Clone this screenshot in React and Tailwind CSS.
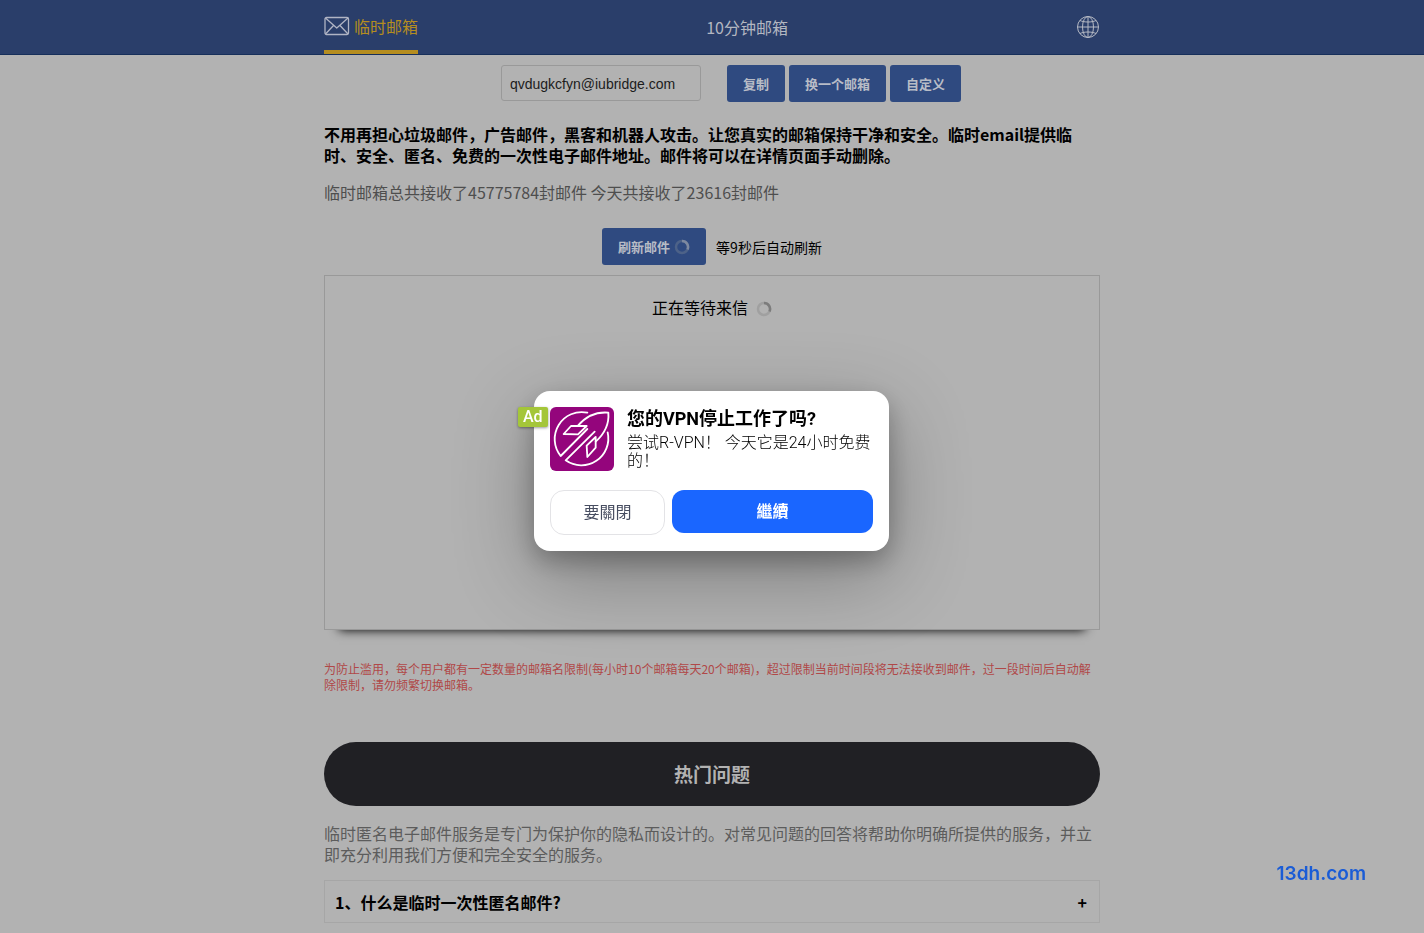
import React from "react";

function Logo() {
  return (
    <svg viewBox="0 0 192 192" className="size-16 shrink-0 rounded-md bg-[#94057c]" fill="none" stroke="#fff" strokeWidth="5.500" strokeLinejoin="round" strokeLinecap="round" aria-hidden="true">
      <path d="M112 17A81 81 0 0 0 32 147L112 66" />
      <path d="M173 76A81 81 0 0 1 47 160L134 74" />
      <path d="M84 56C108 28 140 14 175 17C178 52 164 80 137 104" />
      <path d="M41 81L63 57H110L84 82Z" />
      <path d="M110 116L137 90V122L112 150Z" />
    </svg>
  );
}

function Globe() {
  return (
    <svg viewBox="0 0 24 24" className="size-6" fill="none" stroke="#b5b9c4" strokeWidth="1" aria-hidden="true">
      <circle cx="12" cy="12" r="10.5" />
      <ellipse cx="12" cy="12" rx="5.500" ry="10.5" />
      <path d="M12 1.500V22.500M1.500 12H22.500M4 5.500C8 7.500 16 7.500 20 5.500M4 18.500C8 16.500 16 16.500 20 18.500" />
    </svg>
  );
}

function Envelope() {
  return (
    <svg viewBox="0 0 26 20" className="h-5 w-[26px]" fill="none" stroke="#b0b4c4" strokeWidth="1.3" strokeLinejoin="round" aria-hidden="true">
      <rect x="1" y="1.500" width="23.500" height="17" rx="1.500" />
      <path d="M1.500 2L12.750 12L24 2M1.500 18L9.500 9.500M24 18L16 9.500" />
    </svg>
  );
}

function Spinner({ track, arc }) {
  return (
    <svg viewBox="0 0 16 16" className="size-4" fill="none" strokeWidth="2.500" aria-hidden="true">
      <circle cx="8" cy="8" r="6" stroke={track} />
      <path d="M8 2A6 6 0 0 1 13.500 10.500" stroke={arc} />
    </svg>
  );
}

function BlueButton({ children }) {
  return (
    <button type="button" className="flex h-[37px] items-center gap-1 rounded-[3px] bg-[#2f4a80] px-4 pt-px text-[13px] font-bold text-[#b8bcc6]">
      {children}
    </button>
  );
}

function AdDialog() {
  return (
    <div className="fixed inset-0 flex items-center justify-center pt-[9px] pr-px">
      <section role="dialog" aria-labelledby="ad-title" className="relative w-[355px] rounded-2xl bg-white p-4 font-['Roboto','Noto_Sans_CJK_SC',sans-serif] shadow-[0_10px_24px_rgba(0,0,0,0.25),0_24px_80px_rgba(0,0,0,0.3)]">
        <span className="absolute top-4 -left-4 rounded-xs bg-[#a4c639] px-[5px] text-base leading-5 font-medium text-white shadow-[0_1px_3px_rgba(0,0,0,0.4)]">Ad</span>
        <div className="flex gap-[13px]">
          <Logo />
          <div className="text-black">
            <h2 id="ad-title" className="text-lg leading-6 font-bold">您的VPN停止工作了吗?</h2>
            <p className="pt-[3px] text-base leading-[18px] font-light">尝试R-VPN！ 今天它是24小时免费的！</p>
          </div>
        </div>
        <div className="mt-[19px] flex items-start gap-[7px]">
          <button type="button" className="h-[45px] w-[115px] rounded-[14px] border border-[#e3e3e6] pb-1 font-['Noto_Sans_CJK_TC',sans-serif] text-base text-[#474d60]">要關閉</button>
          <button type="button" className="h-[43px] flex-1 rounded-[12px] bg-[#1a66ff] pb-1 font-['Noto_Sans_CJK_TC',sans-serif] text-base font-bold text-white">繼續</button>
        </div>
      </section>
    </div>
  );
}

export default function App() {
  return (
    <div className="min-h-screen bg-[#b2b2b2] font-['Noto_Sans_CJK_SC',sans-serif] text-black">
      <header className="border-b border-[#172f5a] bg-[#2a3e6a]">
        <nav className="mx-auto flex h-[54px] max-w-[776px] items-center justify-between">
          <a href="#inbox" className="flex h-full items-center gap-1 border-b-4 border-[#b58d20] pt-0.5 text-base text-[#b58d20]">
            <Envelope />
            临时邮箱
          </a>
          <a href="#ten" className="text-base text-[#b3b7c1]">10分钟邮箱</a>
          <button type="button" aria-label="语言"><Globe /></button>
        </nav>
      </header>

      <main className="mx-auto max-w-[776px]">
        <div className="flex items-start justify-center gap-1 pt-2.5 pl-[38px]">
          <input aria-label="邮箱地址" readOnly value="qvdugkcfyn@iubridge.com" className="mr-[22px] h-9 w-[200px] rounded-[3px] border border-[#999] px-2 pt-px font-['Liberation_Sans',sans-serif] text-sm text-[#1c1c1c]" />
          <BlueButton>复制</BlueButton>
          <BlueButton>换一个邮箱</BlueButton>
          <BlueButton>自定义</BlueButton>
        </div>

        <p className="mt-[22px] text-base leading-[21px] font-bold">
          不用再担心垃圾邮件，广告邮件，黑客和机器人攻击。让您真实的邮箱保持干净和安全。临时email提供临时、安全、匿名、免费的一次性电子邮件地址。邮件将可以在详情页面手动删除。
        </p>
        <p className="mt-4 text-base leading-[21px] text-[#4e4e4e]">临时邮箱总共接收了45775784封邮件 今天共接收了23616封邮件</p>

        <div className="mt-[25px] flex items-center justify-center gap-2.5">
          <BlueButton>刷新邮件<Spinner track="#4d6288" arc="#7d89a0" /></BlueButton>
          <span className="text-sm">等9秒后自动刷新</span>
        </div>

        <section className="mt-2.5 flex h-[355px] items-start justify-center gap-2 border border-[#999] pt-[21px] shadow-[0_15px_10px_-15px_#000]">
          <span className="text-base leading-[21px]">正在等待来信</span>
          <span className="pt-1"><Spinner track="#a0a0a0" arc="#7c7c7c" /></span>
        </section>

        <p className="mt-[31px] text-xs leading-4 text-[#b04848]">
          为防止滥用，每个用户都有一定数量的邮箱名限制(每小时10个邮箱每天20个邮箱)，超过限制当前时间段将无法接收到邮件，过一段时间后自动解除限制，请勿频繁切换邮箱。
        </p>

        <h2 className="mt-[49px] flex h-16 items-center justify-center rounded-[32px] bg-[#202024] text-[19px] font-bold text-[#b2b2b2]">热门问题</h2>
        <p className="mt-[17px] text-base leading-[21px] text-[#5c5c5c]">
          临时匿名电子邮件服务是专门为保护你的隐私而设计的。对常见问题的回答将帮助你明确所提供的服务，并立即充分利用我们方便和完全安全的服务。
        </p>
        <button type="button" className="mt-[15px] flex h-[43px] w-full items-center justify-between border border-[#a6a6a6] pr-3 pl-2.5 text-base font-bold">
          <span>1、什么是临时一次性匿名邮件?</span>
          <span>+</span>
        </button>
      </main>

      <AdDialog />
      <span className="fixed right-[58px] bottom-[45px] font-['Inter',sans-serif] text-[19px] leading-7 font-semibold text-[#1a5cd6]">13dh.com</span>
    </div>
  );
}
